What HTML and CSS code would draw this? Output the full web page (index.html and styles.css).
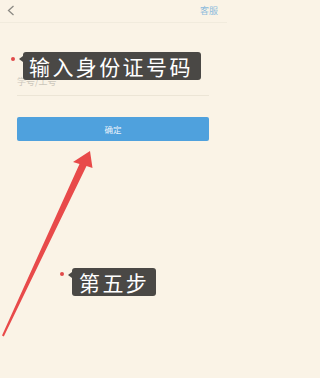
FILE: index.html
```html
<!DOCTYPE html>
<html lang="zh">
<head>
<meta charset="utf-8">
<link rel="stylesheet" href="styles.css">
</head>
<body>
<div class="page">
  <header class="bar">
    <svg class="back" width="8" height="11" viewBox="0 0 8 11"><path d="M6.5 1 L1.5 5.5 L6.5 10" fill="none" stroke="#8c8a84" stroke-width="1.3"/></svg>
    <span class="service">客服</span>
  </header>
  <main class="form">
    <div class="field"><span class="placeholder">学号/工号</span></div>
    <button class="confirm">确定</button>
  </main>

  <span class="dot dot1"></span>
  <div class="tip tip1">输入身份证号码</div>
  <span class="dot dot2"></span>
  <div class="tip tip2">第五步</div>

  <svg class="arrow" width="227" height="378" viewBox="0 0 227 378">
    <polygon points="90,151 92.5,168 86.5,166 3.8,336.5 2,335.5 79.5,164 73,162" fill="#e84a4a"/>
  </svg>
</div>
</body>
</html>
```
FILE: styles.css
```css
* { box-sizing: border-box; }
html, body { margin: 0; padding: 0; }
body {
  background: #faf3e6;
  font-family: "Noto Sans CJK SC", "Noto Sans", sans-serif;
  width: 227px;
  height: 378px;
  overflow: hidden;
}
.page { position: relative; width: 227px; height: 378px; }
.bar {
  height: 23px;
  display: flex;
  align-items: center;
  justify-content: space-between;
  padding: 0 9px 2px 7px;
  border-bottom: 1px solid #f1ebdd;
}
.back { display: block; }
.service { font-size: 9px; color: #8dbbdc; line-height: 1; }
.form { padding: 0 18px 0 17px; }
.field {
  height: 73px;
  border-bottom: 1px solid #ece5d6;
  display: flex;
  align-items: flex-end;
  padding-bottom: 9px;
}
.placeholder { font-size: 9px; color: #cbc6bb; line-height: 1; }
.confirm {
  display: block;
  width: 100%;
  height: 24px;
  margin-top: 21px;
  border: 0;
  border-radius: 2px;
  background: #4fa1dd;
  color: #eaf3fb;
  font-family: inherit;
  font-size: 8.5px;
  padding: 0;
}
.dot {
  position: absolute;
  width: 4px; height: 4px;
  border-radius: 50%;
  background: #e14a4a;
}
.dot1 { left: 11px; top: 57px; }
.dot2 { left: 60px; top: 272px; }
.tip {
  position: absolute;
  height: 28px;
  background: #4a4845;
  color: #fff;
  border-radius: 3px;
  font-size: 21px;
  line-height: 28px;
  letter-spacing: 2.4px;
  white-space: nowrap;
}
.tip::before {
  content: "";
  position: absolute;
  left: -4px;
  top: 4px;
  border-style: solid;
  border-width: 3px 4px 3px 0;
  border-color: transparent #4a4845 transparent transparent;
}
.tip1 { left: 23px; top: 52px; width: 178px; padding-left: 6px; }
.tip2 { left: 72px; top: 268px; width: 84px; padding-left: 7px; }
.arrow { position: absolute; left: 0; top: 0; pointer-events: none; }
```
